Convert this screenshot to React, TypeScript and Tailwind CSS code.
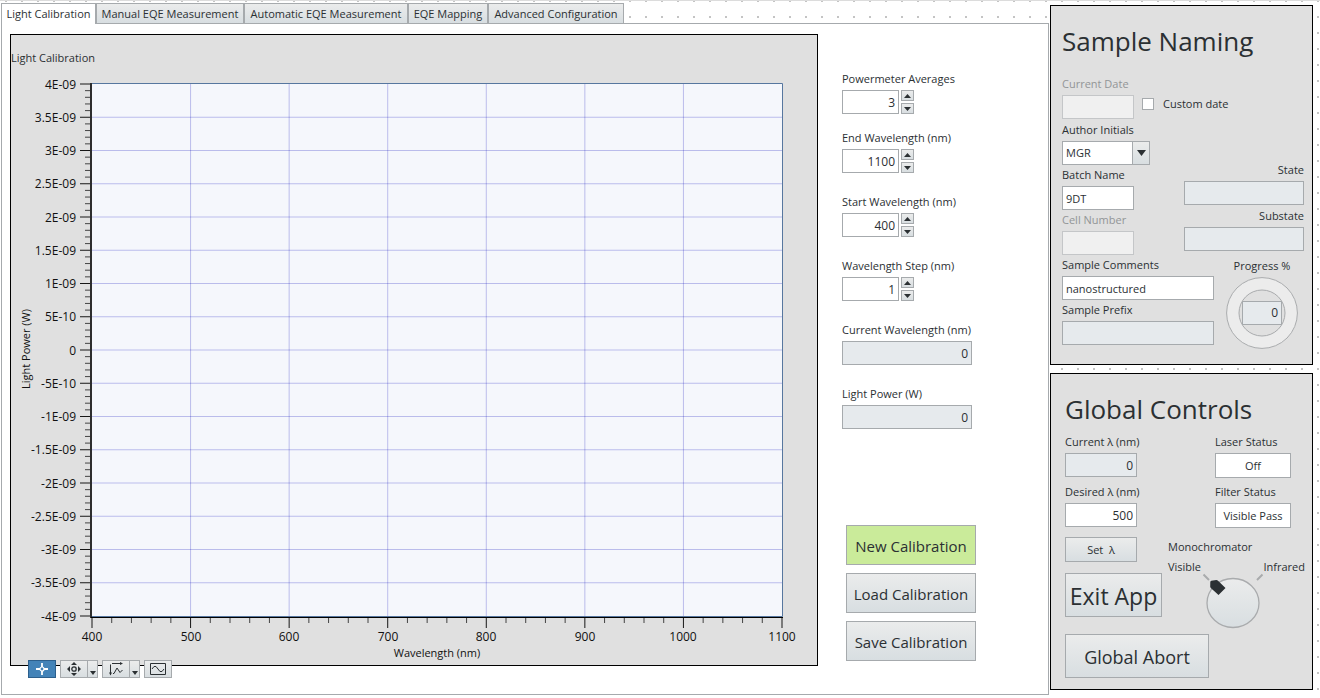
import { useId, useState } from 'react';
import type { ReactNode } from 'react';

const TABS = [
  { name: 'Light Calibration', width: 'w-[95px]' },
  { name: 'Manual EQE Measurement', width: 'w-[148px]' },
  { name: 'Automatic EQE Measurement', width: 'w-[164px]' },
  { name: 'EQE Mapping', width: 'w-[80px]' },
  { name: 'Advanced Configuration', width: 'w-[136px]' },
];

const Y_LABELS = [
  '4E-09', '3.5E-09', '3E-09', '2.5E-09', '2E-09', '1.5E-09', '1E-09', '5E-10', '0',
  '-5E-10', '-1E-09', '-1.5E-09', '-2E-09', '-2.5E-09', '-3E-09', '-3.5E-09', '-4E-09',
];
const X_LABELS = ['400', '500', '600', '700', '800', '900', '1000', '1100'];

const BUTTON = 'border border-[#a6aaad] bg-linear-to-b from-[#ebecec] to-[#d8dee1]';
const BOX = 'block h-6 border border-[#a6aaad] px-[3px] leading-4 outline-none';

function Labelled({ label, muted, right, children }: {
  label: string;
  muted?: boolean;
  right?: boolean;
  children: (id: string) => ReactNode;
}) {
  const id = useId();
  return (
    <div className={right ? 'text-right' : ''}>
      <label
        htmlFor={id}
        className={`mb-[3px] block h-4 leading-4 whitespace-nowrap ${muted ? 'text-[#929597]' : ''}`}
      >
        {label}
      </label>
      {children(id)}
    </div>
  );
}

function TextField({ label, value = '', width, numeric }: {
  label: string;
  value?: string;
  width: string;
  numeric?: boolean;
}) {
  const [text, setText] = useState(value);
  return (
    <Labelled label={label}>
      {(id) => (
        <input
          id={id}
          value={text}
          onChange={(e) => setText(e.target.value)}
          className={`${BOX} ${width} bg-white ${numeric ? 'text-right text-[12px]' : ''}`}
        />
      )}
    </Labelled>
  );
}

function DisabledField({ label }: { label: string }) {
  return (
    <Labelled label={label} muted>
      {(id) => <input id={id} disabled className="block h-6 w-[72px] border border-[#c4c6c8] bg-[#f0f0f0]" />}
    </Labelled>
  );
}

function Readout({ label, value = '', width, right }: { label: string; value?: string; width: string; right?: boolean }) {
  return (
    <Labelled label={label} right={right}>
      {(id) => <input id={id} readOnly value={value} className={`${BOX} ${width} bg-[#e6eaed] text-right text-[12px]`} />}
    </Labelled>
  );
}

function Spinner({ label, initial }: { label: string; initial: number }) {
  const [value, setValue] = useState(initial);
  const arrow = `${BUTTON} flex h-[11px] w-[13px] items-center justify-center`;
  return (
    <Labelled label={label}>
      {(id) => (
        <div className="flex gap-0.5">
          <input
            id={id}
            inputMode="numeric"
            value={value}
            onChange={(e) => setValue(Number(e.target.value) || 0)}
            className={`${BOX} w-[57px] bg-white text-right text-[12px]`}
          />
          <div className="flex flex-col gap-0.5">
            <button type="button" aria-label={`Increase ${label}`} onClick={() => setValue(value + 1)} className={arrow}>
              <svg width="7" height="4" viewBox="0 0 7 4"><path d="M3.5 0L7 4H0z" fill="#2b3033" /></svg>
            </button>
            <button type="button" aria-label={`Decrease ${label}`} onClick={() => setValue(value - 1)} className={arrow}>
              <svg width="7" height="4" viewBox="0 0 7 4"><path d="M0 0h7L3.5 4z" fill="#2b3033" /></svg>
            </button>
          </div>
        </div>
      )}
    </Labelled>
  );
}

function Chart() {
  const left = 81;
  const top = 49;
  const xStep = 690 / 7;
  const yStep = 532 / 16;
  const yMinor = Array.from({ length: 81 }, (_, i) => i);
  const xMinor = Array.from({ length: 36 }, (_, i) => i);
  return (
    <svg viewBox="0 0 806 630" className="block h-auto w-full" role="img" aria-label="Light power against wavelength">
      <rect x="81" y="48.5" width="690.5" height="533" fill="#f5f7fc" />
      {X_LABELS.slice(1, -1).map((l, i) => (
        <path key={l} d={`M${left + (i + 1) * xStep} 49V581`} stroke="#0000b8" strokeOpacity="0.24" />
      ))}
      {Y_LABELS.slice(1, -1).map((l, i) => (
        <path key={l} d={`M81 ${top + (i + 1) * yStep}H771`} stroke="#0000b8" strokeOpacity="0.24" />
      ))}
      <path d="M81 48.5H771.5V581.5H81" fill="none" stroke="#57779f" />
      {yMinor.map((i) => (
        <path key={i} d={`M${i % 5 ? 74 : 69} ${top + (i * yStep) / 5}H79`} stroke="#000" strokeOpacity={i % 5 ? 0.7 : 0.9} />
      ))}
      {xMinor.map((i) => (
        <path key={i} d={`M${left + (i * xStep) / 5} 583V${i % 5 ? 588 : 593}`} stroke="#000" strokeOpacity={i % 5 ? 0.7 : 0.9} />
      ))}
      <path d="M80 48V583" stroke="#000" strokeWidth="1.6" />
      <path d="M80 582.5H772" stroke="#000" />
      <g fontSize="12" fill="#111">
        {Y_LABELS.map((l, i) => (
          <text key={l} x="65" y={Math.floor(top + i * yStep + 5)} textAnchor="end">{l}</text>
        ))}
        {X_LABELS.map((l, i) => (
          <text key={l} x={Math.round(left + i * xStep)} y="606" textAnchor="middle">{l}</text>
        ))}
      </g>
      <g fontSize="11" fill="#111">
        <text x="426" y="622" textAnchor="middle">Wavelength (nm)</text>
        <text transform="translate(19 314) rotate(-90)" textAnchor="middle">Light Power (W)</text>
      </g>
      <text x="0" y="27" fontSize="11" fill="#2b3033">Light Calibration</text>
    </svg>
  );
}

function DropButton({ label }: { label: string }) {
  return (
    <button type="button" aria-label={label} className={`${BUTTON} -ml-px flex h-[18px] w-[11px] items-end justify-center pb-0.5`}>
      <svg width="6" height="4" viewBox="0 0 6 4"><path d="M0 0h6L3 4z" fill="#2b3033" /></svg>
    </button>
  );
}

function ChartTools() {
  const tool = `${BUTTON} flex h-[18px] w-7 items-center justify-center`;
  return (
    <div className="relative -mt-1.5 ml-[18px] flex gap-1">
      <button type="button" aria-label="Cursor" className="flex h-[18px] w-7 items-center justify-center border border-[#2c5f8c] bg-[#4383b8]">
        <svg width="14" height="14" viewBox="0 0 14 14" fill="none" stroke="#fff" strokeWidth="1.8">
          <path d="M7 1v4M7 9v4M1 7h4M9 7h4" /><circle cx="7" cy="7" r="2" strokeWidth="1.2" />
        </svg>
      </button>
      <div className="flex">
        <button type="button" aria-label="Pan" className={tool}>
          <svg width="14" height="14" viewBox="0 0 14 14" fill="#2b3033">
            <path d="M7 0l3 3H4zM7 14l3-3H4zM0 7l3-3v6zM14 7l-3-3v6z" />
            <circle cx="7" cy="7" r="2.2" fill="none" stroke="#2b3033" strokeWidth="1.3" />
          </svg>
        </button>
        <DropButton label="Pan options" />
      </div>
      <div className="flex">
        <button type="button" aria-label="Autoscale" className={tool}>
          <svg width="16" height="14" viewBox="0 0 16 14" fill="none" stroke="#2b3033">
            <path d="M4 1.5h10M2.5 2.500v10" />
            <path d="M5 11.500h1l3-5.500 3 4.500L14.500 8" />
            <path d="M12 0l3 1.5L12 3zM1 10.500h3l-1.500 3z" fill="#2b3033" stroke="none" />
          </svg>
        </button>
        <DropButton label="Autoscale options" />
      </div>
      <button type="button" aria-label="Zoom to fit" className={tool}>
        <svg width="16" height="12" viewBox="0 0 16 12" fill="none" stroke="#2b3033">
          <path d="M.5.5h15v11H.5z" /><path d="M2 6l2-2.500h2L10 8.500h2L14 6" />
        </svg>
      </button>
    </div>
  );
}

function StatusButton({ label, value }: { label: string; value: string }) {
  return (
    <Labelled label={label}>
      {(id) => (
        <button id={id} type="button" className="block h-[25px] w-[76px] border border-[#a6aaad] bg-white whitespace-nowrap">
          {value}
        </button>
      )}
    </Labelled>
  );
}

function SampleNaming() {
  const dateId = useId();
  return (
    <section className="border border-black bg-[#e0e0e0] pt-[17px] pr-2 pb-[19px] pl-[11px]">
      <h2 className="h-[53px] text-[26px] leading-9">Sample Naming</h2>
      <div className="flex items-end gap-2">
        <DisabledField label="Current Date" />
        <div className="mb-[7px] flex h-4 items-center gap-[9px]">
          <input id={dateId} type="checkbox" className="size-3 appearance-none border border-[#a6aaad] bg-white checked:bg-[#4383b8]" />
          <label htmlFor={dateId}>Custom date</label>
        </div>
      </div>
      <div className="mt-[3px] flex items-end justify-between">
        <div className="flex flex-col gap-0.5">
          <Labelled label="Author Initials">
            {(id) => (
              <div className="relative w-[88px]">
                <select id={id} className="block h-6 w-full appearance-none border border-[#a6aaad] bg-white px-[3px] leading-4">
                  <option>MGR</option>
                </select>
                <span className={`${BUTTON} pointer-events-none absolute inset-y-0 right-0 flex w-[18px] items-center justify-center`}>
                  <svg width="9" height="6" viewBox="0 0 9 6"><path d="M0 0h9L4.500 6z" fill="#2b3033" /></svg>
                </span>
              </div>
            )}
          </Labelled>
          <TextField label="Batch Name" value="9DT" width="w-[72px]" />
          <DisabledField label="Cell Number" />
        </div>
        <div className="mb-1 flex flex-col gap-[3px]">
          <Readout label="State" width="w-[120px]" right />
          <Readout label="Substate" width="w-[120px]" right />
        </div>
      </div>
      <div className="mt-0.5 flex h-[88px] justify-between">
        <div className="flex flex-col gap-0.5">
          <TextField label="Sample Comments" value="nanostructured" width="w-[152px]" />
          <Readout label="Sample Prefix" width="w-[152px]" />
        </div>
        <div className="mr-1.5 flex flex-col items-center">
          <span className="mt-px mb-[3px] h-4 leading-4">Progress %</span>
          <div className="grid size-[72px] shrink-0 place-items-center *:col-start-1 *:row-start-1">
            <svg width="72" height="72" viewBox="0 0 72 72" fill="none" stroke="#a9abad">
              <circle cx="36" cy="36" r="29.300" stroke="#ececec" strokeWidth="12.600" />
              <circle cx="36" cy="36" r="35.400" />
              <circle cx="36" cy="36" r="23" />
            </svg>
            <output className="flex h-6 w-10 items-center justify-end border border-[#a6aaad] bg-[#e6eaed] px-[3px] text-[12px]">0</output>
          </div>
        </div>
      </div>
    </section>
  );
}

function GlobalControls() {
  return (
    <section className="border border-black bg-[#e0e0e0] pt-[17px] pr-[7px] pb-[11px] pl-3.5">
      <h2 className="h-[43px] text-[26px] leading-9">Global Controls</h2>
      <div className="flex gap-[78px]">
        <div className="flex w-[72px] flex-col gap-[7px]">
          <Readout label="Current λ (nm)" value="0" width="w-[72px]" />
          <TextField label="Desired λ (nm)" value="500" width="w-[72px]" numeric />
        </div>
        <div className="flex flex-col gap-1.5">
          <StatusButton label="Laser Status" value="Off" />
          <StatusButton label="Filter Status" value="Visible Pass" />
        </div>
      </div>
      <div className="mt-[9px] flex h-24 gap-1.5">
        <div>
          <button type="button" className={`${BUTTON} block h-[25px] w-[72px] whitespace-pre`}>{'Set  λ'}</button>
          <button type="button" className={`${BUTTON} mt-[11px] block h-11 w-[97px] pt-0.5 text-[23px] whitespace-nowrap`}>Exit App</button>
        </div>
        <div className="grow pt-0.5">
          <span className="block h-4 leading-4">Monochromator</span>
          <div className="mt-1 flex h-4 justify-between leading-4">
            <span>Visible</span>
            <span>Infrared</span>
          </div>
          <svg width="62" height="56" viewBox="0 0 62 56" className="-mt-0.5 ml-[34px] block">
            <defs>
              <linearGradient id="knob" x1="0" y1="0" x2="0" y2="1">
                <stop offset="0" stopColor="#ebecec" />
                <stop offset="1" stopColor="#d8dee1" />
              </linearGradient>
            </defs>
            <path d="M1.500 1.500l5.500 5.500M60.500 1.500L55 7" stroke="#a9abad" strokeWidth="2" />
            <ellipse cx="31" cy="30" rx="26" ry="24.500" fill="url(#knob)" stroke="#a9abad" strokeWidth="1.300" />
            <path d="M8.300 9q0-1 1-1.300l5-.7q1 0 1.700.7l7.500 7.300L16.500 22l-7.700-7q-.6-.6-.6-1.500z" fill="#2b3033" />
          </svg>
        </div>
      </div>
      <button type="button" className={`${BUTTON} mt-px block h-11 w-36 pt-0.5 text-[18px] whitespace-nowrap`}>Global Abort</button>
    </section>
  );
}

export default function App() {
  return (
    <div className="flex min-h-screen items-stretch border-t border-[#dcdcdc] bg-[conic-gradient(from_270deg_at_2px_2px,#c4c4c4_90deg,#fff_0)] bg-[length:16px_16px] bg-[position:5px_-1px] pr-[7px] pb-[3px] pl-px font-['Open_Sans','Noto_Sans',sans-serif] text-[11px] leading-4 text-[#2b3033]">
      <main className="mr-px flex min-w-0 grow flex-col pt-0.5">
        <div role="tablist" className="relative flex">
          {TABS.map((tab, i) => (
            <button
              key={tab.name}
              type="button"
              role="tab"
              aria-selected={i === 0}
              className={`${tab.width} -mb-px h-[21px] border border-[#a6aaad] text-center whitespace-nowrap ${
                i === 0 ? 'border-b-0 bg-white pb-px' : 'bg-linear-to-b from-[#ebecec] to-[#d8dee1]'
              }`}
            >
              {tab.name}
            </button>
          ))}
        </div>
        <div className="flex grow border border-[#a6aaad] bg-white pt-2.5 pb-4 pl-2">
          <div className="min-w-0 grow">
            <div className="border border-black bg-[#e0e0e0]">
              <Chart />
            </div>
            <ChartTools />
          </div>
          <div className="ml-6 w-[206px] shrink-0 pt-[37px]">
            <Spinner label="Powermeter Averages" initial={3} />
            <div className="mt-4 flex flex-col gap-[21px]">
              <Spinner label="End Wavelength (nm)" initial={1100} />
              <Spinner label="Start Wavelength (nm)" initial={400} />
              <Spinner label="Wavelength Step (nm)" initial={1} />
              <Readout label="Current Wavelength (nm)" value="0" width="w-[130px]" />
              <Readout label="Light Power (W)" value="0" width="w-[130px]" />
            </div>
            <div className="mt-24 ml-1 flex w-[130px] flex-col gap-2 text-[15px] whitespace-nowrap">
              <button type="button" className="h-10 border border-[#a6aaad] bg-[#caeb9a] pt-0.5">New Calibration</button>
              <button type="button" className={`${BUTTON} h-10 pt-0.5`}>Load Calibration</button>
              <button type="button" className={`${BUTTON} h-10 pt-0.5`}>Save Calibration</button>
            </div>
          </div>
        </div>
      </main>
      <aside className="flex w-[263px] shrink-0 flex-col gap-2 pt-1">
        <SampleNaming />
        <GlobalControls />
      </aside>
    </div>
  );
}
